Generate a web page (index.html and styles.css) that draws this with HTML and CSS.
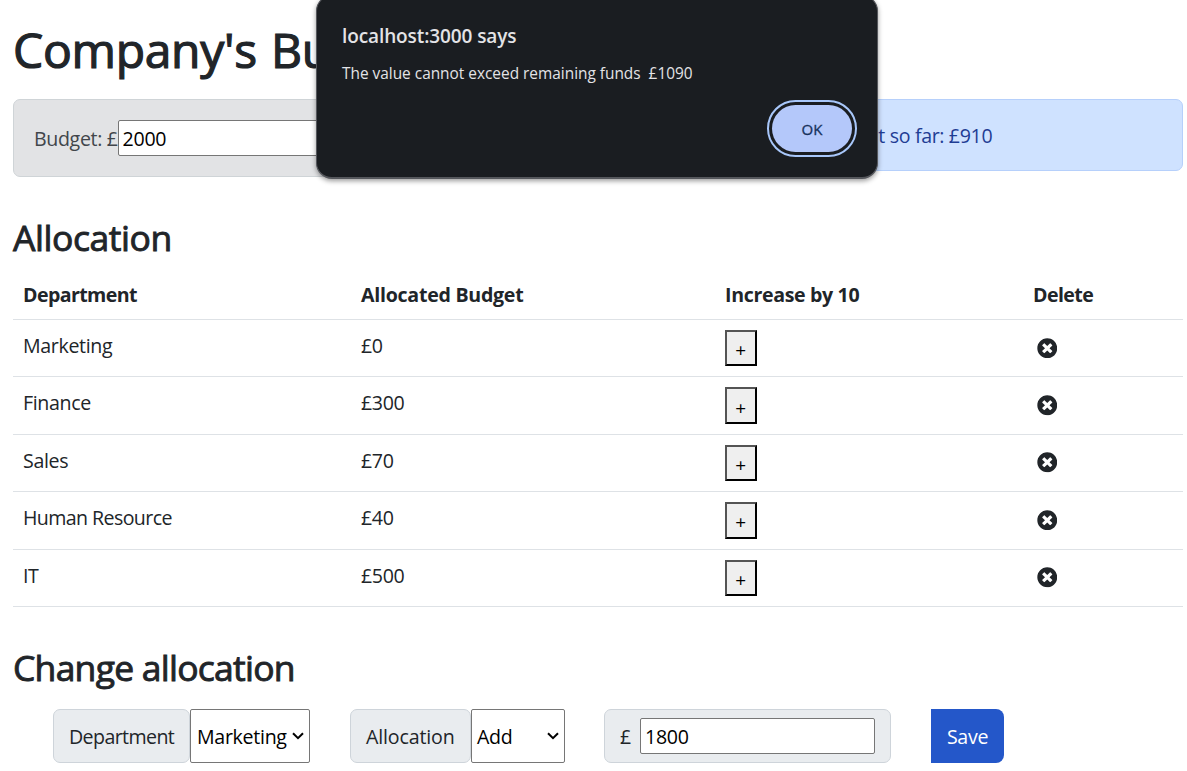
FILE: index.html
```html
<!DOCTYPE html>
<html lang="en">
<head>
<meta charset="utf-8">
<title>Company's Budget</title>
<link rel="stylesheet" href="styles.css">
</head>
<body>
<svg class="sprite" aria-hidden="true">
  <symbol id="times-circle" viewBox="0 0 512 512"><path fill="currentColor" d="M256 8C119 8 8 119 8 256s111 248 248 248 248-111 248-248S393 8 256 8zm121.600 313.100c4.700 4.700 4.700 12.300 0 17L338 377.600c-4.700 4.700-12.300 4.700-17 0L256 312l-65.100 65.600c-4.700 4.700-12.300 4.700-17 0L134.400 338c-4.700-4.700-4.700-12.300 0-17l65.600-65-65.600-65.100c-4.700-4.700-4.700-12.300 0-17l39.600-39.600c4.700-4.700 12.300-4.700 17 0l65 65.700 65.100-65.600c4.700-4.700 12.300-4.700 17 0l39.600 39.600c4.700 4.700 4.700 12.300 0 17L312 256l65.600 65.100z"/></symbol>
  <symbol id="chevron" viewBox="0 0 12 8"><path fill="none" stroke="currentColor" stroke-width="2" d="M1 1.200l5 5 5-5"/></symbol>
</svg>
<main class="container">
  <h1 class="title">Company's Bud</h1>
  <section class="summary">
    <div class="alert alert-secondary"><span>Budget: £</span><input class="budget-input" type="text" value="2000"></div>
    <div class="alert alert-primary"><span>Spent so far: £910</span></div>
  </section>
  <h2 class="heading heading-allocation">Allocation</h2>
  <table class="table">
    <colgroup><col class="c1"><col class="c2"><col class="c3"><col class="c4"></colgroup>
    <thead><tr><th class="snug">Department</th><th class="loose">Allocated Budget</th><th>Increase by 10</th><th class="snug">Delete</th></tr></thead>
    <tbody>
      <tr><td>Marketing</td><td>£0</td><td class="action"><button class="plus">+</button></td><td class="action"><svg class="delete"><use href="#times-circle"/></svg></td></tr>
      <tr><td>Finance</td><td>£300</td><td class="action"><button class="plus">+</button></td><td class="action"><svg class="delete"><use href="#times-circle"/></svg></td></tr>
      <tr><td>Sales</td><td>£70</td><td class="action"><button class="plus">+</button></td><td class="action"><svg class="delete"><use href="#times-circle"/></svg></td></tr>
      <tr><td class="snug">Human Resource</td><td>£40</td><td class="action"><button class="plus">+</button></td><td class="action"><svg class="delete"><use href="#times-circle"/></svg></td></tr>
      <tr><td>IT</td><td>£500</td><td class="action"><button class="plus">+</button></td><td class="action"><svg class="delete"><use href="#times-circle"/></svg></td></tr>
    </tbody>
  </table>
  <h2 class="heading heading-change">Change allocation</h2>
  <form class="change">
    <label class="addon addon-dept">Department</label>
    <div class="select select-dept"><span>Marketing</span><svg class="chevron"><use href="#chevron"/></svg></div>
    <label class="addon addon-alloc">Allocation</label>
    <div class="select select-alloc"><span>Add</span><svg class="chevron"><use href="#chevron"/></svg></div>
    <div class="addon addon-cost"><span>£</span><input class="cost-input" type="text" value="1800"></div>
    <button class="save" type="button">Save</button>
  </form>
</main>
<div class="dialog" role="alertdialog">
  <div class="dialog-title">localhost:3000 says</div>
  <div class="dialog-text">The value cannot exceed remaining funds&nbsp; £1090</div>
  <button class="ok">OK</button>
</div>
</body>
</html>
```
FILE: styles.css
```css
* { box-sizing: border-box; }
body {
  margin: 0;
  background: #fff;
  color: #212529;
  font: 19.6px/30px "Segoe UI", "Open Sans", sans-serif;
  height: 771px;
  overflow: hidden;
}
input, button { font: inherit; color: #000; letter-spacing: -0.3px; }
.sprite { display: none; }
.container { width: 1170px; margin-left: 13px; padding-top: 20px; }
.title { margin: 0; font-size: 48px; line-height: 60px; font-weight: 400; height: 79px; letter-spacing: -0.3px; word-spacing: 2px; -webkit-text-stroke: 1.200px #212529; white-space: nowrap; width: 330px; }
.summary { display: grid; grid-template-columns: repeat(3, 370px); column-gap: 30px; align-items: start; height: 117px; }
.alert { border: 1px solid; border-radius: 7px; padding: 20px; display: flex; align-items: center; letter-spacing: -0.35px; }
.alert-secondary { background: #e2e3e5; border-color: #cfd4d7; color: #41464b; height: 78px; }
.alert-secondary span { padding-top: 2px; }
.alert-primary { grid-column: 3; background: #cfe2ff; border-color: #b6d0fb; color: #1f3d94; height: 72px; padding-top: 22px; }
.budget-input { width: 240px; height: 36px; border: 1px solid #767676; border-radius: 2px; padding: 1px 4px; background: #fff; }
.heading { margin: 0; font-size: 35.500px; line-height: 43px; font-weight: 400; -webkit-text-stroke: 0.900px #212529; }
.heading-allocation { height: 54px; letter-spacing: -0.45px; }
.table { width: 1170px; table-layout: fixed; border-collapse: separate; border-spacing: 0; }
.c1 { width: 338px; } .c2 { width: 364px; } .c3 { width: 308px; } .c4 { width: 160px; }
th, td { padding: 10px; border-bottom: 1px solid #dee2e6; text-align: left; vertical-align: top; letter-spacing: -0.35px; }
.snug { letter-spacing: -0.6px; }
.loose { letter-spacing: -0.27px; }
th { height: 50px; padding-bottom: 9px; font-weight: 700; }
td { height: 57.400px; padding-top: 11px; }
.action { padding-top: 10px; }
.plus { display: block; width: 32px; height: 36.400px; padding: 4px 1px 0 0; border: 2px outset #000; border-radius: 0; background: #efefef; font-size: 19px; line-height: 28px; text-align: center; }
.delete { display: block; width: 20.500px; height: 20.500px; margin: 7.700px 0 0 3.750px; }
.heading-change { margin-top: 39px; height: 63px; letter-spacing: -0.75px; }
.change { display: flex; height: 54px; margin-left: 40px; letter-spacing: -0.3px; }
.addon { background: #e9ecef; border: 1px solid #ced4da; border-radius: 7px; padding: 2px 15px 0; display: flex; align-items: center; }
.addon-dept { width: 137px; letter-spacing: -0.6px; }
.select { border: 1px solid #767676; border-radius: 2px; background: #fff; color: #000; display: flex; align-items: center; justify-content: space-between; padding: 0 5px 0 6px; }
.select span { padding-top: 2px; }
.select-dept { width: 120px; margin-right: 40px; }
.addon-alloc { width: 121px; letter-spacing: -0.15px; }
.select-alloc { width: 94px; margin-right: 39px; padding-left: 5px; }
.chevron { width: 12px; height: 8px; }
.addon-cost { width: 287px; justify-content: space-between; margin-right: 40px; padding-top: 0; }
.addon-cost span { padding-top: 2px; }
.cost-input { width: 235px; height: 36px; border: 1px solid #767676; border-radius: 2px; padding: 3px 4px 1px; }
.save { width: 73px; border: 0; border-radius: 0 8px 8px 0; background: #2457c9; color: #fff; padding: 2px 0 0; }
.dialog { position: absolute; left: 316px; top: -5px; width: 562px; height: 184px; border: 1px solid #55575c; border-width: 1px 1px 2px; border-radius: 16px; background: #1a1d21; color: #e3e3e6; box-shadow: 0 2px 5px rgba(0,0,0,.4); padding: 25px 25px 0; display: flex; flex-direction: column; }
.dialog-title { font-size: 19px; font-weight: 600; line-height: 30px; letter-spacing: -0.1px; }
.dialog-text { font-size: 15.400px; line-height: 24px; margin-top: 11px; }
.ok { width: 80px; height: 47px; margin: 19px 0 0 430px; border: 0; border-radius: 24px; background: #b4c8fa; color: #17325c; font-size: 15px; font-weight: 400; -webkit-text-stroke: 0.300px #17325c; letter-spacing: 0; padding: 0; outline: 2px solid #a8c7fa; outline-offset: 3px; }
```
